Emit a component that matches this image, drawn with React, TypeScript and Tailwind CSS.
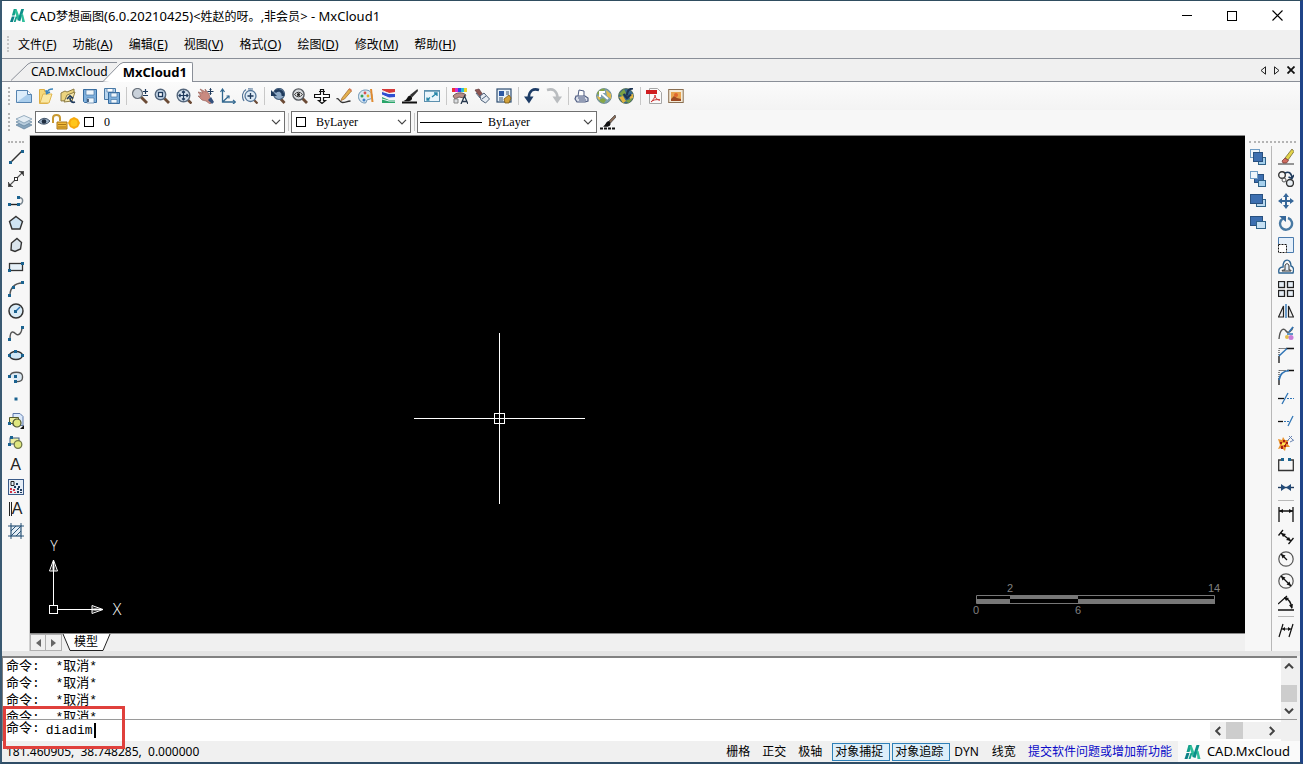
import { useState } from 'react'
import type { ReactNode } from 'react'

interface Tool {
  id: string
  label: string
}

interface ToolButtonProps {
  tool: Tool
}

const navy = '#1f3a5c'
const blue = '#2f74b5'
const ink = '#111111'

const lens = (
  <>
    <path d="M10 10l5 5" stroke="#6b4a35" strokeWidth="2.8" />
    <circle cx="6.500" cy="6.500" r="5.200" fill="#c3d5e8" stroke="#55677c" strokeWidth="1.4" />
  </>
)

const dot = (x: number, y: number) => <rect x={x - 1} y={y - 1} width="3" height="3" fill="#1b6390" />

const icons: Record<string, ReactNode> = {
  new: (
    <>
      <path d="M.5 2.5h11l4 4v8H.5z" fill="#dcedfb" stroke="#5583b0" />
      <path d="M1 14L12 6h3v8z" fill="#a9cdec" />
      <path d="M11.5 2.5v4h4" fill="#fff" stroke="#5583b0" />
    </>
  ),
  open: (
    <>
      <path d="M1.5 1.5h5v2h3v12h-8z" fill="#f6d879" stroke="#dcae44" />
      <path d="M5 6h9l-3 9H2z" fill="#fae8a4" stroke="#e0b650" />
      <path d="M15 1c-4 0-5 1-6 4M8 2l.6 3.6L12 4" stroke="#3d86bb" strokeWidth="1.5" />
    </>
  ),
  openCloud: (
    <>
      <path d="M1 13V5l4-2 2 1 7-3v4l-3 7z" fill="#ecd47e" stroke="#8d7d45" />
      <path d="M4 14l3-7 8-3-3 9z" fill="#f8e9af" stroke="#8d7d45" />
      <path d="M15 14c-3 1-5-1-5-4M7 11l3-3 3 2.500" stroke={navy} strokeWidth="1.7" />
    </>
  ),
  save: (
    <>
      <path d="M1.5 1.5h13v13h-12l-1-1z" fill="#7fb0dc" stroke="#356b9f" />
      <path d="M4 2h8v5H4zM5 10h7v5H5z" fill="#eef6fc" stroke="#4a7aa6" strokeWidth=".7" />
      <path d="M6 11v3" stroke={navy} strokeWidth="1.5" />
    </>
  ),
  saveAll: (
    <>
      <path d="M.5.5h11v11H.5z" fill="#b8d5ee" stroke="#4a7aa6" />
      <path d="M3 1v3h6V1" fill="#fff" stroke="#4a7aa6" strokeWidth=".7" />
      <path d="M4.500 4.500h11v11h-11z" fill="#7fb0dc" stroke="#356b9f" />
      <path d="M7 5h6v4H7zM7 11.500h6V15H7z" fill="#eef6fc" stroke="#4a7aa6" strokeWidth=".7" />
    </>
  ),
  zoomRealtime: (
    <>
      <path d="M9 9l6 6" stroke="#6b4a35" strokeWidth="2.800" />
      <circle cx="5.500" cy="5.500" r="5" fill="#c9d1da" stroke="#6a727c" strokeWidth="1.200" />
      <path d="M11 3.500h5M13.500 1v5M11 7.500h5" stroke={navy} strokeWidth="1.200" />
    </>
  ),
  zoomWindow: (
    <>
      {lens}
      <rect x="4.500" y="4.500" width="4" height="4" fill="#fff" stroke={navy} strokeWidth="1.3" />
    </>
  ),
  zoomExtents: (
    <>
      <path d="M12 12l3.500 3.500" stroke="#6b4a35" strokeWidth="2.600" />
      <circle cx="7.500" cy="7.500" r="6.300" fill="#d5e2ee" stroke="#55677c" strokeWidth="1.400" />
      <path d="M7.500 3v9M3 7.500h9M6 4.500L7.500 3 9 4.500M6 10.500L7.500 12 9 10.500M4.500 6L3 7.500 4.500 9M10.500 6L12 7.500 10.500 9" stroke={navy} strokeWidth="1.200" />
    </>
  ),
  pan: (
    <>
      <path d="M0 4l5 1-3-4 6 3-1-3 4 5 1 4 3 3-3 3-4-3-4-1-4-4 3 0z" fill="#c98a80" stroke="#9c655d" strokeWidth=".7" />
      <path d="M10 12l3-3 3 5-2 2z" fill="#34507c" />
      <path d="M12.500.500v6M9.500 3.500h6M11.500 1.500l1-1 1 1M11.500 5.500l1 1 1-1" stroke={navy} />
    </>
  ),
  ucs: (
    <>
      <path d="M2.500 2v12H15M2.500 14L9 8" stroke="#31678f" strokeWidth="1.300" />
      <path d="M.500 4l2-3 2 3M13 12l2.500 2-2.500 2M6.500 8H9v2.500" stroke="#31678f" strokeWidth="1.200" />
    </>
  ),
  zoomPrev: (
    <>
      <path d="M12 12l3.500 3.500" stroke="#6b4a35" strokeWidth="2.200" />
      <circle cx="8.500" cy="8" r="5.500" fill="#deebf6" stroke="#55779a" strokeWidth="1.300" />
      <path d="M8.500 5v6M5.500 8h6" stroke={navy} strokeWidth="1.300" />
      <path d="M4 1.500C0 4-.500 9 2 13M6 .800l5 .200" stroke="#55779a" strokeWidth="1.200" />
    </>
  ),
  zoomBack: (
    <>
      <path d="M9 9l5.500 6" stroke="#6b4a35" strokeWidth="2.800" />
      <circle cx="9" cy="6" r="5.500" fill="#8ea9c5" stroke="#445e7c" strokeWidth="1.200" />
      <path d="M13 8c0-6-5-7-8-4" stroke={navy} strokeWidth="2.600" />
      <path d="M1 8V2l6 6z" fill={navy} />
    </>
  ),
  zoomObject: (
    <>
      <path d="M10 10l5 5" stroke="#6b4a35" strokeWidth="2.800" />
      <circle cx="6.500" cy="6.500" r="5.600" fill="#d6d9dd" stroke="#55595f" strokeWidth="1.400" />
      <path d="M2.500 6.500q4-4.500 8 0-4 4.500-8 0z" fill="#fff" stroke="#333" />
      <circle cx="6.500" cy="6.500" r="1.600" fill="#222" />
    </>
  ),
  dynamicPan: (
    <path d="M6.500 3.500V1.500h3v5h6v3h-6v3h2L8 15.500l-3.500-3h2v-3h-6v-3h6zM5 3.500h6" fill="#fff" stroke={ink} strokeWidth="1.200" />
  ),
  pencil: (
    <>
      <path d="M.500 11c2-2 3 3.500 6 3.500s4-1 8-1.500" stroke="#333" strokeWidth="1.300" />
      <path d="M6 10l7-9 2.500 2-7 8-3.500 1.500z" fill="#e3b04b" stroke="#a4703a" strokeWidth=".8" />
      <path d="M12.500 1.500l1-1.500L16 2l-1 1.500z" fill="#d77a54" />
    </>
  ),
  palette: (
    <>
      <path d="M7.500 2C3 2 .500 5 .500 8.500S3 15 7 15c2 0 1-2 2-3s5 0 5-4-3-6-6.500-6z" fill="#dbe9f3" stroke="#6a93b3" />
      <circle cx="4" cy="8" r="1.500" fill="#33a05a" />
      <circle cx="7" cy="5" r="1.400" fill="#d9534f" />
      <circle cx="6" cy="12" r="1.500" fill="#3f7fc8" />
      <circle cx="10" cy="8" r="1.400" fill="#e6b422" />
      <path d="M13 1l1.500 13" stroke="#e08b32" strokeWidth="2" />
    </>
  ),
  layers3: (
    <>
      <path d="M2 1h13v3L9 5 2 3z" fill="#d63a3a" />
      <path d="M2 4l7 2h6v4l-6 0-7-3z" fill="#2f4fd0" />
      <path d="M2 9l7 3h6v3H2z" fill="#2aa56a" />
      <path d="M2 2.500l7 3h6M2 7l7 3 6-.500M2 11l7 2h6" stroke="#f3f6f9" />
    </>
  ),
  matchBrush: (
    <>
      <path d="M0 14.500h15" stroke={ink} strokeWidth="2" />
      <path d="M15.500 1L8 7l2 2.500L16 3z" fill="#333" />
      <path d="M8.500 7.500c-4 0-2 4-7 5.500 5 1 9 0 8.500-3.500z" fill="#111" />
    </>
  ),
  linetypeBrush: (
    <>
      <path d="M0 14.500h15" stroke={ink} strokeWidth="2" strokeDasharray="3 1" />
      <path d="M15 1L9 7l1.500 2L16 3z" fill="#8a6c58" stroke="#333" strokeWidth=".6" />
      <path d="M9 7c-3 0-3 4-6 5.500 4 1 8 0 7.500-3.500z" fill="#111" />
    </>
  ),
  fullscreen: (
    <>
      <rect x=".500" y="2.500" width="15" height="11" fill="#eaf5fb" stroke="#5d90ae" />
      <path d="M1 3h14" stroke="#5d90ae" strokeWidth="1.500" />
      <path d="M8 9l5-4M10 5h3v3M6 9.500L3 12M3 9.500V12h2.500" stroke="#2686a8" strokeWidth="1.300" />
    </>
  ),
  textStyle: (
    <>
      <path d="M0 0h3v4H0z" fill="#e33" />
      <path d="M3 0h3v4H3z" fill="#d329d0" />
      <path d="M6 0h3v4H6z" fill="#2b49e6" />
      <path d="M9 0h3v4H9z" fill="#28bcd5" />
      <path d="M12 0h3v4h-3z" fill="#e7d32b" />
      <path d="M1 8c3-4 10-4 13-1l-2 3-5-1-4 2z" fill="#b88c86" stroke="#725a58" />
      <path d="M2 11h4v4H2z" fill="#dcdfe2" stroke="#888" />
      <path d="M9 16l3.500-8L16 16M10.500 13.500h4" stroke="#26374d" strokeWidth="1.300" />
    </>
  ),
  eraseTag: (
    <>
      <path d="M1 2l4-1 4 6-3 2z" fill="#8d5552" stroke="#603b3b" strokeWidth=".7" />
      <path d="M6 8l4-3 5.500 6-4 4L7 12z" fill="#e6ecf3" stroke="#4d6079" />
      <path d="M8 11l4-3M2 5l4 5" stroke="#4d6079" />
    </>
  ),
  properties: (
    <>
      <rect x="1" y="1" width="14" height="13" fill="#e8f1f8" stroke="#2d4d71" strokeWidth="1.200" />
      <rect x="3" y="3" width="5" height="5" fill="#2c59a3" />
      <path d="M10 4h3M10 6h3M3 10h4M3 12h4" stroke="#34506e" />
      <path d="M8 11l5-4 2 3-2 5-4 0z" fill="#d0a13b" stroke="#765514" strokeWidth=".8" />
    </>
  ),
  undo: (
    <>
      <path d="M15 2C9 0 5 3 4.800 9.500" stroke="#1d3c66" strokeWidth="2.600" />
      <path d="M0 8.500h9.500L5 15.500z" fill="#1d3c66" />
    </>
  ),
  redo: (
    <>
      <path d="M1 2c6-2 10 1 10.500 7.500" stroke="#b9bcbf" strokeWidth="2.600" />
      <path d="M6.500 8.500H16l-4.800 7z" fill="#b9bcbf" />
    </>
  ),
  print: (
    <>
      <path d="M4 8l1-6 5 1 0 5" fill="#fff" stroke="#4d5b80" />
      <path d="M2 8h9l3 2v3l-3 1H3l-2-3z" fill="#d9deea" stroke="#4d5b80" strokeWidth="1.200" />
      <path d="M4 10h7M5 12h7" stroke="#4d5b80" />
    </>
  ),
  globeIn: (
    <>
      <circle cx="8" cy="8" r="7.500" fill="#7c9fae" stroke="#5c7c82" strokeWidth=".7" />
      <path d="M1 6c1-4 6-6 8-5L7 5l-4 2zM3 12l4-2 3 2-2 3c-3 0-4-2-5-3z" fill="#86a645" />
      <path d="M10 2l5 4 0 5-4-3zM1 8l3 1 0 3-2-1z" fill="#e2bc4e" />
      <path d="M12 11L5 5M4 9V4h5" stroke="#fff" strokeWidth="2" />
    </>
  ),
  globeOut: (
    <>
      <circle cx="8" cy="8" r="7.500" fill="#36698f" stroke="#49603b" strokeWidth=".7" />
      <path d="M1 6l5-5 2 4-3 4zM7 13l5-2 3-1-4 5z" fill="#7ba142" />
      <path d="M1 9l4 6 3-2-3-5zM11 7l4-1v4l-3 1z" fill="#e4b540" />
      <path d="M15 .500c-5 0-6 3-6 7M5.500 6l3.500 4 4-3.500" stroke="#1d3554" strokeWidth="2" />
    </>
  ),
  pdf: (
    <>
      <path d="M3.500.500h8l4 4v11h-12z" fill="#fafafa" stroke="#a6a6a6" />
      <path d="M0 2h11v4H0z" fill="#cf1d20" />
      <path d="M5 14c3-3 4-5 4-7 0 3 2 5 5 5-4-1-7 0-9 2z" stroke="#c33" />
    </>
  ),
  image: (
    <>
      <rect x=".700" y="1.500" width="14.500" height="13" fill="#f3ead8" stroke="#8a6f52" />
      <rect x="3" y="4" width="10" height="8" fill="#e7a34e" />
      <path d="M3 11l3-3 3 2 4 1v2H3z" fill="#9c4a22" />
      <circle cx="8" cy="7" r="2" fill="#e0662c" />
    </>
  ),
  layerStack: (
    <>
      <path d="M0 11l8-3.500 8 3.500-8 4z" fill="#87a5bd" stroke="#5d7f9b" strokeWidth=".7" />
      <path d="M0 8l8-3.500L16 8l-8 4z" fill="#b8cddd" stroke="#5d7f9b" strokeWidth=".7" />
      <path d="M0 5l8-3.500L16 5 8 9z" fill="#e4edf4" stroke="#7391a9" strokeWidth=".7" />
    </>
  ),
  line: (
    <>
      <path d="M2 14L14 2" stroke="#333" strokeWidth="1.500" />
      {dot(2, 13)}
      {dot(14, 2)}
    </>
  ),
  ray: (
    <>
      <path d="M1 15L15 1M.500 11v4.500H5M11 .500h4.500V5" stroke="#555" strokeWidth="1.100" />
      <path d="M1 12v3h3zM12 1h3v3z" fill="#333" />
      <rect x="6.500" y="6.500" width="3" height="3" fill="#fff" stroke="#333" />
    </>
  ),
  pline: (
    <>
      <path d="M2 11.500h8" stroke="#222" strokeWidth="1.400" />
      <path d="M10 11.500c6 0 6-7 1-7" stroke="#7a8791" strokeWidth="1.500" />
      {dot(1, 11)}
      {dot(10, 11)}
      {dot(10, 4)}
    </>
  ),
  polygon: <path d="M8 1.500l6.500 5-2.500 7.500H4L1.500 6.500z" fill="#cfe4f3" stroke="#333" strokeWidth="1.400" />,
  polygon2: <path d="M9 1.500l4.500 4-1 6.500L7 14.500 3 13l.500-7z" fill="#d9e4ec" stroke="#333" strokeWidth="1.400" />,
  rect: (
    <>
      <rect x="1.500" y="4.500" width="13" height="7" fill="#e6f1f9" stroke="#333" strokeWidth="1.300" />
      {dot(1, 11)}
      {dot(14, 4)}
    </>
  ),
  arc: (
    <>
      <path d="M2 14C2 7 7 2 14 2" stroke="#555" strokeWidth="1.500" />
      {dot(1, 14)}
      {dot(5, 6)}
      {dot(14, 1)}
    </>
  ),
  circle: (
    <>
      <circle cx="8" cy="8" r="7" fill="#d9ebf6" stroke="#333" strokeWidth="1.500" />
      <path d="M8 8l4-4" stroke={blue} strokeWidth="1.400" />
      {dot(7, 8)}
    </>
  ),
  spline: (
    <>
      <path d="M2 14C2 4 6 7 8 9s6 0 6-7" stroke="#555" strokeWidth="1.400" />
      {dot(1, 14)}
      {dot(14, 2)}
    </>
  ),
  ellipse: (
    <>
      <ellipse cx="8" cy="8.500" rx="6.500" ry="4" fill="#cfe6f5" stroke="#333" strokeWidth="1.300" />
      {dot(1, 8)}
      {dot(7, 4)}
      {dot(14, 8)}
    </>
  ),
  ellipseArc: (
    <>
      <path d="M2 7c1-5 12-5 12.500 0S12 13 8 12.500" fill="#dceaf4" stroke="#555" strokeWidth="1.300" />
      {dot(1, 7)}
      {dot(7, 7)}
      {dot(7, 12)}
    </>
  ),
  point: <rect x="6.500" y="6.500" width="3" height="3" fill="#1b6390" />,
  blockInsert: (
    <>
      <path d="M5 .500h7l3 3v9H5z" fill="#dbe9fa" stroke="#5b77a8" />
      <path d="M1.500 4.500h9v6h-9z" fill="#eff0a0" stroke="#555a2a" />
      <circle cx="9" cy="10" r="4" fill="#dfe77e" stroke="#4c5330" strokeWidth="1.200" />
      {dot(1, 10)}
      <path d="M16 12v4h-4z" fill={ink} />
    </>
  ),
  blockMake: (
    <>
      <rect x="2" y="3" width="9" height="6" fill="#eff0a0" stroke="#3a5b80" />
      <circle cx="10" cy="9.500" r="3.800" fill="#dfe77e" stroke="#6f7848" strokeWidth="1.300" />
      {dot(1, 9)}
      {dot(3, 2)}
    </>
  ),
  hatchGrid: (
    <>
      <rect x=".500" y=".500" width="15" height="15" fill="#e6edf6" stroke="#3b5b88" />
      <path d="M3 2.500h3v4H3z" stroke="#222" />
      <path d="M8 4h2v2H8zM10 7h2v2h-2zM6 7h2v2H6zM9 9h2v2H9zM12 10h2v2h-2zM9 12h2v2H9zM12 13h2v1h-2z" fill={navy} />
      <path d="M2 9h2v2H2zM5 10h2v2H5zM2 12h2v2H2zM6 13h2v1H6z" fill="#cf3548" />
    </>
  ),
  region: (
    <>
      <rect x="3" y="3" width="10" height="10" fill="#e3edf5" stroke="#2b5478" strokeWidth="1.200" />
      <path d="M3 8l5-5M3 13L13 3M8 13l5-5M0 3h3M0 13h3M13 3h3M13 13h3M3 0v3M13 0v3M3 13v3M13 13v3" stroke="#2b5478" />
    </>
  ),
  front: (
    <>
      <rect x=".500" y=".500" width="9" height="8" fill="#eef5fb" stroke="#6f9cc4" />
      <rect x="8.500" y="8.500" width="7" height="7" fill="#a6d0ec" stroke="#2f6288" />
      <rect x="3.500" y="3.500" width="9" height="9" fill="#3d6fb0" stroke="#28507f" />
    </>
  ),
  back: (
    <>
      <rect x="4.500" y="3.500" width="9" height="8" fill="#3d6fb0" stroke="#28507f" />
      <rect x=".500" y=".500" width="7" height="7" fill="#eef5fb" stroke="#6f9cc4" />
      <rect x="8.500" y="9.500" width="7" height="6" fill="#a6d0ec" stroke="#2f6288" />
    </>
  ),
  above: (
    <>
      <rect x="6.500" y="6.500" width="9" height="7" fill="#b9d8ee" stroke="#2f6288" />
      <rect x=".500" y="1.500" width="12" height="9" fill="#3d6fb0" stroke="#28507f" />
    </>
  ),
  under: (
    <>
      <rect x=".500" y="1.500" width="12" height="9" fill="#3d6fb0" stroke="#28507f" />
      <rect x="6.500" y="6.500" width="9" height="7" fill="#c6e0f3" stroke="#2f6288" />
    </>
  ),
  erase: (
    <>
      <path d="M0 15h16" stroke="#333" />
      <path d="M7 9l7-9 2 2.500L10 11z" fill="#e3d349" stroke="#746b32" strokeWidth=".8" />
      <path d="M4 12l3-3 3.500 2.500-2 2.500H5z" fill="#cf6c5f" stroke="#7c3b35" strokeWidth=".8" />
    </>
  ),
  copy: (
    <>
      <circle cx="4" cy="4" r="3.300" stroke="#333" strokeWidth="1.400" />
      <circle cx="6" cy="9" r="2" stroke="#555" />
      <circle cx="12" cy="12" r="3.500" fill="#e9eff4" stroke="#333" strokeWidth="1.400" />
      <path d="M7 2c4-2 6 0 7 4M16 4l-2 3.500L10.500 6" stroke={navy} strokeWidth="1.600" />
    </>
  ),
  move: (
    <>
      <path d="M8 2v12M2 8h12" stroke="#366799" strokeWidth="2" />
      <path d="M8 0l3 4H5zM8 16l3-4H5zM0 8l4-3v6zM16 8l-4-3v6z" fill="#366799" />
    </>
  ),
  rotate: (
    <>
      <path d="M10 3a6 6 0 11-5 .500" stroke="#4879a3" strokeWidth="2.400" />
      <path d="M1 1h7v6z" fill="#366799" />
    </>
  ),
  scale: (
    <>
      <path d="M.500 7V.500h15v15H9" fill="#e6f0fa" stroke="#4a7bad" />
      <rect x=".500" y="7.500" width="8" height="8" fill="#fff" stroke={ink} strokeDasharray="2 1" />
    </>
  ),
  offset: (
    <>
      <path d="M1 14c-1-4 1-6 4-6 0-9 8-9 8-1 3 1 3 4 2 7z" stroke="#2f6593" strokeWidth="1.400" />
      <path d="M4 12c0-1 1-1 3-1V7c0-3 4-3 4 0v4c2 0 2 0 2 1z" fill="#e5eff8" stroke="#333" />
    </>
  ),
  array: (
    <>
      {[1, 10].map((y) =>
        [1, 10].map((x) => (
          <rect key={`${x}-${y}`} x={x - 0.5} y={y - 0.5} width="6" height="6" fill="#e6eef6" stroke="#222" strokeWidth="1.300" />
        ))
      )}
    </>
  ),
  mirror: (
    <>
      <path d="M5.500 3v11h-5zM10.500 3v11h5z" fill="#eee" stroke="#222" strokeWidth="1.200" />
      <path d="M8 1v14" stroke={blue} strokeWidth="1.400" />
    </>
  ),
  splineEdit: (
    <>
      <path d="M1 14C2 3 6 3 8 6s6 0 7-4" stroke="#555" strokeWidth="1.400" />
      <path d="M9 9h6M11 7l4-5" stroke={blue} strokeWidth="1.500" />
      <circle cx="9" cy="12" r="2" fill="#e5bd4b" />
      <circle cx="13" cy="12.500" r="2.500" fill="#c77dd8" />
    </>
  ),
  chamfer: (
    <>
      <path d="M8 1.500h8M1 9v7" stroke={ink} strokeWidth="1.300" />
      <path d="M1 8V1.500h7" stroke={ink} strokeDasharray="1 1" />
      <path d="M1 9l8-7.500" stroke={blue} strokeWidth="1.500" />
    </>
  ),
  fillet: (
    <>
      <path d="M9 1.500h7M1 9v7" stroke={ink} strokeWidth="1.300" />
      <path d="M1 8V1.500h7" stroke={ink} strokeDasharray="1 1" />
      <path d="M1 11C2 5 5 2 11 1.500" stroke={blue} strokeWidth="1.700" />
    </>
  ),
  trim: (
    <>
      <path d="M0 7.500h6" stroke={ink} strokeWidth="1.300" />
      <path d="M9 7.500h7" stroke={blue} strokeDasharray="2 1" />
      <path d="M4 13l6-11" stroke={blue} strokeWidth="1.300" />
    </>
  ),
  extend: (
    <>
      <path d="M0 8.500h5" stroke={ink} strokeWidth="1.300" />
      <path d="M6 8.500h6" stroke={blue} strokeDasharray="2 1" />
      <path d="M10 13l5-10" stroke={blue} strokeWidth="1.300" />
    </>
  ),
  explode: (
    <>
      <path d="M0 4l4 1 1-3 2 3 4 0-2 3 3 4-4 0-1 4-3-3-4 1 2-4z" fill="#e9912c" />
      <path d="M2 7h2v2H2zM6 9h2v3H6zM3 11h2v3H3zM8 7h2v2H8zM5 5h2v2H5z" fill="#a51d18" />
      <path d="M9 6l5-5M12 7l4-2M11 1l4 4" stroke="#6782b1" />
      <path d="M4 8h3v2H4z" fill="#ffe65c" />
    </>
  ),
  breakAt: (
    <>
      <path d="M5 3H.700v10.500h14.600V3H11" stroke="#333" strokeWidth="1.300" />
      {dot(4, 2)}
      {dot(11, 2)}
    </>
  ),
  join: (
    <>
      <path d="M0 8.500h16" stroke={navy} strokeWidth="1.400" />
      <path d="M3 5l5 3.500L3 12zM13 5L8 8.500 13 12z" fill="#244b78" />
    </>
  ),
  dimLinear: (
    <>
      <path d="M1 0v15M15 0v15M1 4h14" stroke={ink} strokeWidth="1.300" />
      <path d="M1 4l4-2v4zM15 4l-4-2v4z" fill={ink} />
    </>
  ),
  dimAligned: (
    <>
      <path d="M3 4l10 8M.500 6.500L5 1M10.500 15l5-6" stroke={ink} strokeWidth="1.300" />
      <path d="M3 4l5 1-3 3zM13 12l-5-1 3-3z" fill={ink} />
    </>
  ),
  dimRadius: (
    <>
      <circle cx="8" cy="8" r="7.200" stroke="#555" strokeWidth="1.200" />
      <path d="M3 3l6 6" stroke={ink} strokeWidth="1.300" />
      <path d="M3 3l4.500 1.500-3 3z" fill={ink} />
    </>
  ),
  dimDiameter: (
    <>
      <circle cx="8" cy="8" r="7.200" stroke="#555" strokeWidth="1.200" />
      <path d="M3 3l10 10" stroke={ink} strokeWidth="1.300" />
      <path d="M3 3l4.500 1.500-3 3zM13 13l-4.500-1.500 3-3z" fill={ink} />
    </>
  ),
  dimAngular: (
    <>
      <path d="M0 15h16M0 9l9-8M7 3c4 1 6 5 7 10" stroke={ink} strokeWidth="1.300" />
      <path d="M6 2l5 1-3 3zM14 14l-3-4 4-1z" fill={ink} />
    </>
  ),
  dimOblique: (
    <>
      <path d="M1 14L5 1M11 14l4-13M4 6h9" stroke={ink} strokeWidth="1.200" />
      <path d="M4 6l3-2v4zM13 6l-3-2v4z" fill={ink} />
    </>
  ),
}

const fileTools: Tool[][] = [
  [
    { id: 'new', label: '新建' },
    { id: 'open', label: '打开' },
    { id: 'openCloud', label: '打开云图' },
    { id: 'save', label: '保存' },
    { id: 'saveAll', label: '全部保存' },
  ],
  [
    { id: 'zoomRealtime', label: '实时缩放' },
    { id: 'zoomWindow', label: '窗口缩放' },
    { id: 'zoomExtents', label: '范围缩放' },
    { id: 'pan', label: '平移' },
    { id: 'ucs', label: '坐标系' },
    { id: 'zoomPrev', label: '放大' },
  ],
  [
    { id: 'zoomBack', label: '上一视图' },
    { id: 'zoomObject', label: '缩放对象' },
    { id: 'dynamicPan', label: '动态平移' },
    { id: 'pencil', label: '草图' },
    { id: 'palette', label: '颜色' },
    { id: 'layers3', label: '图层' },
    { id: 'matchBrush', label: '格式刷' },
    { id: 'fullscreen', label: '全屏' },
  ],
  [
    { id: 'textStyle', label: '文字样式' },
    { id: 'eraseTag', label: '清理' },
    { id: 'properties', label: '特性' },
  ],
  [
    { id: 'undo', label: '撤销' },
    { id: 'redo', label: '重做' },
  ],
  [
    { id: 'print', label: '打印' },
    { id: 'globeIn', label: '上传' },
    { id: 'globeOut', label: '下载' },
  ],
  [
    { id: 'pdf', label: '输出PDF' },
    { id: 'image', label: '输出图片' },
  ],
]

const drawTools: Tool[] = [
  { id: 'line', label: '直线' },
  { id: 'ray', label: '构造线' },
  { id: 'pline', label: '多段线' },
  { id: 'polygon', label: '正多边形' },
  { id: 'polygon2', label: '多边形' },
  { id: 'rect', label: '矩形' },
  { id: 'arc', label: '圆弧' },
  { id: 'circle', label: '圆' },
  { id: 'spline', label: '样条曲线' },
  { id: 'ellipse', label: '椭圆' },
  { id: 'ellipseArc', label: '椭圆弧' },
  { id: 'point', label: '点' },
  { id: 'blockInsert', label: '插入块' },
  { id: 'blockMake', label: '创建块' },
  { id: 'text', label: '单行文字' },
  { id: 'hatchGrid', label: '填充' },
  { id: 'mtext', label: '多行文字' },
  { id: 'region', label: '面域' },
]

const orderTools: Tool[] = [
  { id: 'front', label: '前置' },
  { id: 'back', label: '后置' },
  { id: 'above', label: '置于对象之上' },
  { id: 'under', label: '置于对象之下' },
]

const modifyTools: Tool[][] = [
  [
    { id: 'erase', label: '删除' },
    { id: 'copy', label: '复制' },
    { id: 'move', label: '移动' },
    { id: 'rotate', label: '旋转' },
    { id: 'scale', label: '缩放' },
    { id: 'offset', label: '偏移' },
    { id: 'array', label: '阵列' },
    { id: 'mirror', label: '镜像' },
    { id: 'splineEdit', label: '编辑曲线' },
    { id: 'chamfer', label: '倒角' },
    { id: 'fillet', label: '圆角' },
    { id: 'trim', label: '修剪' },
    { id: 'extend', label: '延伸' },
    { id: 'explode', label: '分解' },
    { id: 'breakAt', label: '打断' },
    { id: 'join', label: '合并' },
  ],
  [
    { id: 'dimLinear', label: '线性标注' },
    { id: 'dimAligned', label: '对齐标注' },
    { id: 'dimRadius', label: '半径标注' },
    { id: 'dimDiameter', label: '直径标注' },
    { id: 'dimAngular', label: '角度标注' },
  ],
  [{ id: 'dimOblique', label: '编辑标注' }],
]

const menus = [
  ['文件', 'F'],
  ['功能', 'A'],
  ['编辑', 'E'],
  ['视图', 'V'],
  ['格式', 'O'],
  ['绘图', 'D'],
  ['修改', 'M'],
  ['帮助', 'H'],
]

function ToolButton({ tool }: ToolButtonProps) {
  return (
    <button aria-label={tool.label} title={tool.label} className="flex h-[22px] w-[22px] shrink-0 items-center justify-center hover:bg-sky-100">
      {tool.id === 'text' && <span className="font-['Liberation_Sans',sans-serif] text-base leading-4 text-[#222]">A</span>}
      {tool.id === 'mtext' && (
        <span className="flex h-[14px] items-center border-l border-[#222] pl-px">
          <span className="border-l border-[#222] font-['Liberation_Sans',sans-serif] text-base leading-[14px] text-[#222]">A</span>
        </span>
      )}
      {icons[tool.id] && (
        <svg className="h-4 w-4" viewBox="0 0 16 16" fill="none">
          {icons[tool.id]}
        </svg>
      )}
    </button>
  )
}

function Logo({ className }: { className: string }) {
  return (
    <svg className={className} viewBox="0 0 16 16">
      <path d="M4 1h3L5 8H2z" fill="#12a08a" />
      <path d="M2 9h3l-2 6H0z" fill="#0b7f86" />
      <path d="M5 3l2-2 3 8-2 4z" fill="#2fbf9b" />
      <path d="M6 9l2 0-2 6H4z" fill="#12a08a" />
      <path d="M12 1h3l-4 13-3-1z" fill="#0b8f88" />
      <path d="M12 6l2 1 2 8h-3z" fill="#2fbf9b" />
    </svg>
  )
}

// Latin runs are set one step larger than the Chinese characters
function MixedText({ text }: { text: string }) {
  return (
    <>
      {text.split(/([\u3000-\u9fff]+)/).map((part, idx) => (
        <span key={idx} className={idx % 2 ? 'text-xs' : 'text-[13px]'}>
          {part}
        </span>
      ))}
    </>
  )
}

function Chevron({ className }: { className: string }) {
  return (
    <svg className={className} viewBox="0 0 10 6" fill="none" stroke="#444" strokeWidth="1.2">
      <path d="M1 .800l4 4 4-4" />
    </svg>
  )
}

function Divider() {
  return <span className="ml-[3px] mr-[2px] h-[18px] w-px shrink-0 border-r border-[#c8c8c8]" />
}

function Grip() {
  return <span className="ml-[6px] mr-[3px] h-[18px] w-[2px] shrink-0 border-l-2 border-dotted border-[#b4b4b4]" />
}

function TitleBar() {
  return (
    <header className="flex h-[29px] items-center bg-white">
      <Logo className="ml-2 h-[15px] w-[15px]" />
      <h1 className="ml-[5px] flex-1 whitespace-pre leading-5">
        <MixedText text="CAD梦想画图(6.0.20210425)<姓赵的呀。,非会员> - MxCloud1" />
      </h1>
      <button aria-label="最小化" className="flex h-full w-[45px] items-center justify-center">
        <span className="h-px w-[10px] bg-black" />
      </button>
      <button aria-label="最大化" className="flex h-full w-[46px] items-center justify-center">
        <span className="h-[10px] w-[10px] border border-black" />
      </button>
      <button aria-label="关闭" className="flex h-full w-[45px] items-center justify-center">
        <svg className="h-[11px] w-[11px]" viewBox="0 0 11 11" stroke="#000" strokeWidth="1.1">
          <path d="M.500.500l10 10M10.500.500l-10 10" />
        </svg>
      </button>
    </header>
  )
}

function MenuBar() {
  return (
    <nav className="flex h-[28px] items-center bg-[#f0f0f0]">
      <span className="ml-[5px] h-[16px] w-[2px] border-l-2 border-dotted border-[#c4c4c4]" />
      <span className="flex pl-px">
        {menus.map(([name, key]) => (
          <button key={name} className="px-2 text-[13px] leading-5 hover:bg-sky-100">
            <span className="text-xs">{name}</span>(<u>{key}</u>)
          </button>
        ))}
      </span>
    </nav>
  )
}

function DocumentTabs() {
  return (
    <div className="flex h-[24px] items-end border-y border-[#8a8f98] bg-[#f0f0f0]">
      <button className="ml-[9px] flex h-[19px]">
        <svg className="h-[19px] w-5" viewBox="0 0 20 19" fill="none" stroke="#8a8f98">
          <path d="M0 18.500L17 2l3-1.500" />
        </svg>
        <span className="h-full border-t border-[#8a8f98] pr-[9px] text-xs leading-[17px]">CAD.MxCloud</span>
      </button>
      <button className="-mb-px -ml-[14px] flex h-[20px]">
        <svg className="h-[20px] w-5" viewBox="0 0 20 20" fill="#fff" stroke="#8a8f98">
          <path d="M0 19.500L17 2l3-1.500h1V21" />
        </svg>
        <span className="h-full rounded-tr-[2px] border-r border-t border-[#8a8f98] bg-white pr-[5px] text-[13px] font-bold leading-[18px]">MxCloud1</span>
      </button>
      <span className="flex-1" />
      <span className="flex h-full items-center pr-[2px]">
        <button aria-label="上一个" className="flex w-[14px] justify-center">
          <svg className="h-[9px] w-[6px]" viewBox="0 0 6 9" fill="none" stroke="#222">
            <path d="M5.500.800v7.400L1 4.500z" />
          </svg>
        </button>
        <button aria-label="下一个" className="flex w-[14px] justify-center">
          <svg className="h-[9px] w-[6px]" viewBox="0 0 6 9" fill="none" stroke="#222">
            <path d="M.500.800v7.400L5 4.500z" />
          </svg>
        </button>
        <button aria-label="关闭图纸" className="flex w-[14px] justify-center">
          <svg className="h-2 w-2" viewBox="0 0 8 8" stroke="#111" strokeWidth="1.800">
            <path d="M.500.500l7 7M7.500.500l-7 7" />
          </svg>
        </button>
      </span>
    </div>
  )
}

function MainToolbar() {
  return (
    <div className="flex h-[28px] items-center bg-linear-to-b from-[#fbfbfb] to-[#f3f3f3]">
      <Grip />
      {fileTools.map((group, idx) => (
        <div key={group[0].id} className="flex items-center">
          {idx > 0 && <Divider />}
          {group.map((tool) => (
            <ToolButton key={tool.id} tool={tool} />
          ))}
        </div>
      ))}
    </div>
  )
}

function PropertyToolbar() {
  const selectClass = 'min-w-0 flex-1 appearance-none bg-transparent font-["Liberation_Serif",serif] text-xs leading-5 outline-none'
  return (
    <div className="flex h-[25px] items-center bg-[#f7f7f7] pb-px">
      <Grip />
      <ToolButton tool={{ id: 'layerStack', label: '图层管理器' }} />
      <div className="flex h-[22px] w-[250px] items-center border border-[#707070] bg-white">
        <svg className="ml-[2px] h-4 w-[42px] shrink-0" viewBox="0 0 42 16" fill="none">
          <path d="M0 8q6-7 12-1-5 6-12 1z" fill="#9fb4c9" stroke="#44566b" />
          <circle cx="6" cy="7.500" r="2.300" fill="#1f2d40" />
          <path d="M15 9V4c0-4 7-4 7 0v3" stroke="#c99a34" strokeWidth="2" />
          <path d="M19 8h10v7H19z" fill="#f0b93a" stroke="#a97718" />
          <path d="M20 10.500h8M20 13h8" stroke="#a97718" />
          <path d="M36 3l4 2 2 4-2 4-4 2-4-2-2-4 2-4z" fill="#f7a90c" />
          <circle cx="36" cy="9" r="3.500" fill="#ffc61a" />
        </svg>
        <span className="ml-[4px] h-[10px] w-[10px] shrink-0 border border-black" />
        <select aria-label="当前图层" className={`${selectClass} pl-[10px]`}>
          <option>0</option>
        </select>
        <Chevron className="pointer-events-none mx-[3px] h-[6px] w-[10px]" />
      </div>
      <Divider />
      <div className="flex h-[22px] w-[120px] items-center border border-[#707070] bg-white">
        <span className="ml-[4px] h-[10px] w-[10px] shrink-0 border border-black" />
        <select aria-label="颜色" className={`${selectClass} pl-[10px]`}>
          <option>ByLayer</option>
        </select>
        <Chevron className="pointer-events-none mx-[3px] h-[6px] w-[10px]" />
      </div>
      <Divider />
      <div className="flex h-[22px] w-[180px] items-center border border-[#707070] bg-white">
        <span className="ml-[2px] h-px w-[62px] shrink-0 bg-black" />
        <select aria-label="线型" className={`${selectClass} pl-[6px]`}>
          <option>ByLayer</option>
        </select>
        <Chevron className="pointer-events-none mx-[3px] h-[6px] w-[10px]" />
      </div>
      <ToolButton tool={{ id: 'linetypeBrush', label: '特性匹配' }} />
    </div>
  )
}

function Canvas() {
  return (
    <main className="relative flex-1 border-y border-[#8a8a8a] bg-black">
      <svg className="absolute left-[384px] top-[197px] h-[171px] w-[171px]" viewBox="0 0 171 171" fill="none" stroke="#fff">
        <path d="M85.500 0v171M0 85.500h171" />
        <rect x="80.500" y="80.500" width="10" height="10" />
      </svg>
      <svg className="absolute bottom-[11px] left-[10px] h-[92px] w-[96px]" viewBox="-4 -8 96 92" fill="none" stroke="#fff">
        <rect x="5.500" y="67.500" width="8" height="8" />
        <path d="M9.500 67V22M14 71.500h45M9.500 22l-4 11h8zM59 71.500l-11-4v8z" />
        <path d="M9.500 23l-1.500 10M9.500 23l1.500 10M58 71.500l-10-1.500M58 71.500l-10 1.500" strokeWidth=".6" />
        <text x="10" y="13" textAnchor="middle" fill="#fff" stroke="none" className="font-['Open_Sans',sans-serif] text-sm font-light">Y</text>
        <text x="73" y="77" textAnchor="middle" fill="#fff" stroke="none" className="font-['Open_Sans',sans-serif] text-base font-light">X</text>
      </svg>
      <svg className="absolute bottom-[17px] right-[21px] h-9 w-[252px]" viewBox="0 0 252 36" fill="none">
        <path d="M4.500 15.500h238v8H4.500z" stroke="#777" />
        <path d="M38 15h68v4H38zM5 19h33v5H5zM106 19h137v5H106z" fill="#777" />
        <g fill="#808080" className="font-['Liberation_Sans',sans-serif] text-[11px]" textAnchor="middle">
          <text x="38" y="12">2</text>
          <text x="242" y="12">14</text>
          <text x="4" y="34">0</text>
          <text x="106" y="34">6</text>
        </g>
      </svg>
    </main>
  )
}

function LayoutTabs() {
  return (
    <div className="flex h-[17px] bg-[#f0f0f0]">
      <button aria-label="向左" className="flex w-4 items-center justify-center border border-[#b0b0b0]">
        <svg className="h-2 w-[5px]" viewBox="0 0 5 8" fill="#666">
          <path d="M5 0v8L0 4z" />
        </svg>
      </button>
      <button aria-label="向右" className="flex w-4 items-center justify-center border border-l-0 border-[#b0b0b0]">
        <svg className="h-2 w-[5px]" viewBox="0 0 5 8" fill="#666">
          <path d="M0 0v8l5-4z" />
        </svg>
      </button>
      <button className="flex">
        <svg className="h-[17px] w-[12px]" viewBox="0 0 12 17">
          <path d="M1 0h11v17H8z" fill="#fff" />
          <path d="M1 0l7 16.500h4" fill="none" stroke="#222" />
        </svg>
        <span className="border-b border-[#222] bg-white text-xs leading-4">模型</span>
        <svg className="h-[17px] w-[13px]" viewBox="0 0 13 17">
          <path d="M0 0h12L5 17H0z" fill="#fff" />
          <path d="M12 0L5 16.500H0" fill="none" stroke="#222" />
        </svg>
      </button>
    </div>
  )
}

function SideGrip() {
  return <span className="mx-[2px] mb-[3px] mt-[6px] h-[2px] shrink-0 border-t-2 border-dotted border-[#b4b4b4]" />
}

function CommandPanel() {
  const [command, setCommand] = useState('diadim')
  const mono = 'font-["Liberation_Mono","Noto_Sans_CJK_SC",monospace] text-[13px]'

  return (
    <section className="relative mr-[3px] border-l border-t-2 border-[#808080] bg-white">
      <div className="flex h-[62px] border-b border-[#9a9a9a]">
        <div className={`${mono} flex-1 overflow-hidden whitespace-pre pl-[3px] leading-[17px]`}>
          {[0, 1, 2, 3].map((n) => (
            <p key={n}>{'命令:  *取消*'}</p>
          ))}
        </div>
        <div className="flex w-[16px] flex-col items-center justify-between bg-[#f0f0f0] py-[5px]">
          <Chevron className="h-[6px] w-[10px] rotate-180 stroke-2" />
          <span className="mt-[10px] h-[17px] w-full bg-[#cdcdcd]" />
          <Chevron className="h-[6px] w-[10px] stroke-2" />
        </div>
      </div>
      <div className="flex h-[21px]">
        <label htmlFor="command" className={`${mono} pl-[3px] leading-[17px]`}>
          命令:
        </label>
        <input
          id="command"
          value={command}
          onChange={(e) => setCommand(e.target.value)}
          size={6}
          className="ml-[6px] w-[48px] bg-transparent font-['Liberation_Mono',monospace] text-[13px] leading-5 outline-none"
        />
        <span className="mt-[3px] h-[15px] w-[2px] bg-black" />
        <span className="flex-1" />
        <div className="my-[2px] flex w-[71px] items-center bg-[#f0f0f0]">
          <Chevron className="mx-[3px] h-[6px] w-[10px] rotate-90 stroke-2" />
          <span className="h-full w-[17px] bg-[#cdcdcd]" />
          <span className="flex-1" />
          <Chevron className="mx-[4px] h-[6px] w-[10px] -rotate-90 stroke-2" />
        </div>
        <span className="w-4 bg-[#f0f0f0]" />
      </div>
      <span className="pointer-events-none absolute -bottom-2 left-0 z-10 h-[43px] w-[122px] border-[3px] border-[#e0403c]" />
    </section>
  )
}

function StatusBar() {
  const plain = 'px-[6px] leading-[18px]'
  const pressed = 'border border-[#2f80b8] bg-[#dceefa] pl-[2px] pr-[6px] leading-4'
  return (
    <footer className="flex h-[21px] items-center bg-[#f0f0f0] text-xs">
      <output className="flex-1 whitespace-pre pl-1">{'181.460905,  38.748285,  0.000000'}</output>
      <button className={plain}>栅格</button>
      <button className={plain}>正交</button>
      <button className={plain}>极轴</button>
      <span className="mx-1 flex gap-[2px]">
        <button className={pressed}>对象捕捉</button>
        <button className={pressed}>对象追踪</button>
      </span>
      <button className="pr-[7px]">DYN</button>
      <button className={plain}>线宽</button>
      <a href="#feedback" className="px-[6px] text-[#0a0ac8]">
        提交软件问题或增加新功能
      </a>
      <span className="flex h-full items-center bg-[#fafafa] pl-[6px] pr-[10px]">
        <Logo className="mr-[6px] h-4 w-[17px]" />
        <span className="text-[13px]">CAD.MxCloud</span>
      </span>
    </footer>
  )
}

export default function App() {
  return (
    <div className="flex h-screen flex-col overflow-hidden border-b-2 border-l-2 border-r-[3px] border-t border-b-[#2f4d66] border-l-[#3a5a72] border-r-[#1f4488] border-t-[#2f4d60] bg-[#f0f0f0] font-['Noto_Sans','Noto_Sans_CJK_SC',sans-serif] text-black">
      <TitleBar />
      <MenuBar />
      <DocumentTabs />
      <MainToolbar />
      <PropertyToolbar />
      <div className="flex min-h-0 flex-1">
        <aside className="flex w-7 shrink-0 flex-col items-center border-r border-[#d0d0d0] bg-[#f7f7f7]">
          <span className="mb-[3px] mt-[6px] h-[2px] w-4 shrink-0 border-t-2 border-dotted border-[#b4b4b4]" />
          {drawTools.map((tool) => (
            <ToolButton key={tool.id} tool={tool} />
          ))}
        </aside>
        <div className="flex min-w-0 flex-1 flex-col">
          <Canvas />
          <LayoutTabs />
        </div>
        <aside className="flex w-[55px] shrink-0 flex-col bg-[#f7f7f7] px-[2px]">
          <SideGrip />
          <div className="flex flex-1">
            <div className="flex w-[25px] flex-col border-r border-[#b8b8b8]">
              {orderTools.map((tool) => (
                <ToolButton key={tool.id} tool={tool} />
              ))}
            </div>
            <div className="flex flex-col pl-[3px]">
              {modifyTools.map((group, idx) => (
                <div key={group[0].id}>
                  {idx > 0 && <hr className="mx-[3px] mb-[3px] mt-[2px] border-[#b8b8b8]" />}
                  {group.map((tool) => (
                    <ToolButton key={tool.id} tool={tool} />
                  ))}
                </div>
              ))}
            </div>
          </div>
        </aside>
      </div>
      <div className="h-[5px] shrink-0 bg-[#e4e4e4]" />
      <CommandPanel />
      <StatusBar />
    </div>
  )
}
